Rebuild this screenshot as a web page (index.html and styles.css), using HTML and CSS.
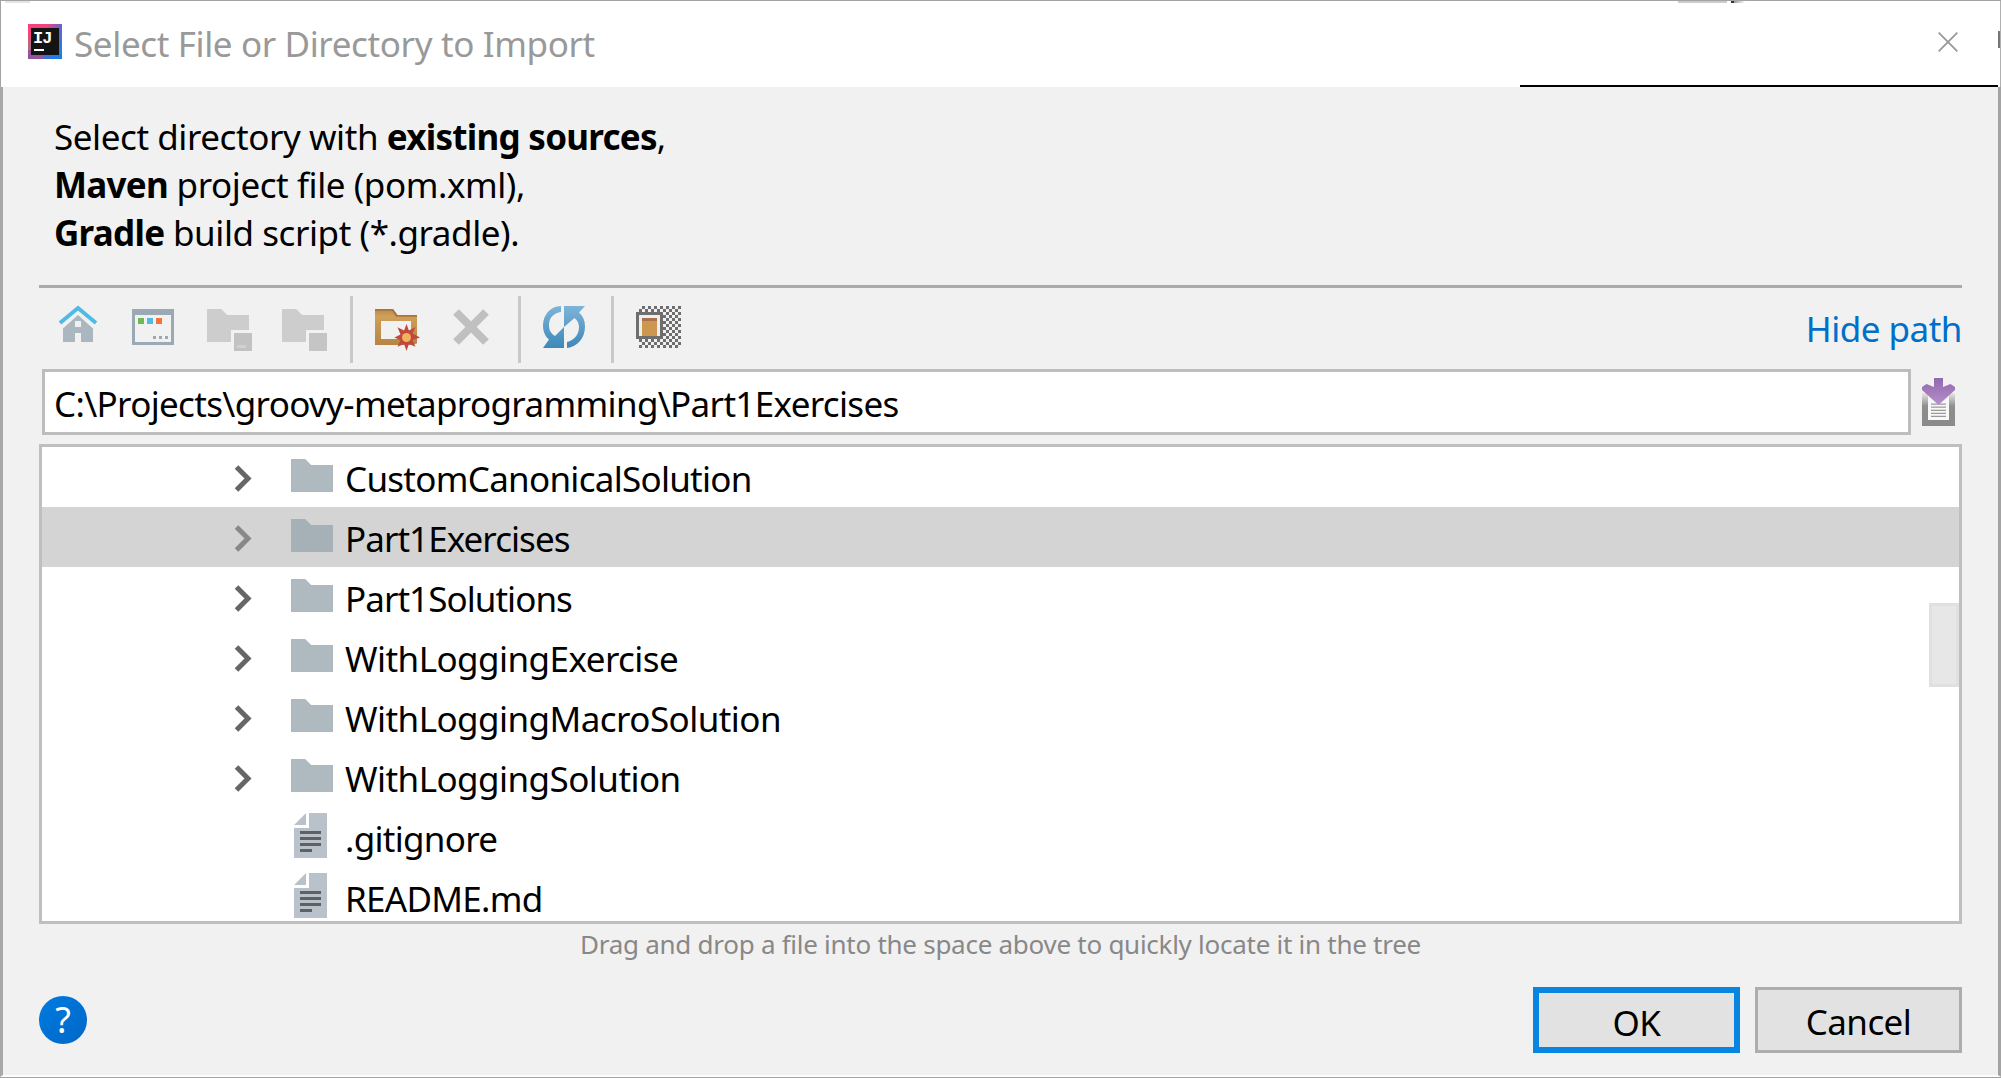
FILE: index.html
```html
<!DOCTYPE html>
<html lang="en">
<head>
<meta charset="utf-8">
<title>Select File or Directory to Import</title>
<link rel="stylesheet" href="styles.css">
</head>
<body>
<svg class="defs" aria-hidden="true">
  <defs>
    <linearGradient id="logo" x1="0" y1="0" x2="1" y2="1"><stop offset="0" stop-color="#ff3f7c"/><stop offset=".3" stop-color="#ee447f"/><stop offset=".5" stop-color="#6b62c8"/><stop offset="1" stop-color="#0a84f0"/></linearGradient>
    <linearGradient id="wood" x1="0" y1="0" x2="0" y2="1"><stop offset="0" stop-color="#b9884b"/><stop offset=".2" stop-color="#cf9f5b"/><stop offset="1" stop-color="#b78443"/></linearGradient>
    <linearGradient id="blue" x1="0" y1="0" x2="0" y2="1"><stop offset="0" stop-color="#7db4d8"/><stop offset="1" stop-color="#3d88b8"/></linearGradient>
    <linearGradient id="tray" x1="0" y1="0" x2="0" y2="1"><stop offset="0" stop-color="#e8e8e8"/><stop offset=".4" stop-color="#8e8e8e"/><stop offset="1" stop-color="#8a8a8a"/></linearGradient>
    <linearGradient id="violet" x1="0" y1="0" x2="0" y2="1"><stop offset="0" stop-color="#9068ad"/><stop offset="1" stop-color="#b78fcb"/></linearGradient>
    <pattern id="checker" width="2" height="2" patternUnits="userSpaceOnUse"><rect width="1" height="1" fill="#6e6e6e"/><rect x="1" y="1" width="1" height="1" fill="#6e6e6e"/></pattern>
    <symbol id="chevron" viewBox="0 0 18 27"><path d="M2.500 2 14 13.500 2.500 25" fill="none" stroke="currentColor" stroke-width="5"/></symbol>
    <symbol id="folder" viewBox="0 0 14 11"><path d="M0 0h4.700l2 2H14v9H0z" fill="currentColor"/></symbol>
    <symbol id="file" viewBox="0 0 11 15"><path d="M5 0h6v15H0V5h5zM4 0v4H0z" fill="#b9c2ca"/><path d="M2 6h7v1H2zM2 8h7v1H2zM2 10h7v1H2zM2 12h4v1H2z" fill="#5e6163"/></symbol>
  </defs>
</svg>
<div class="window">
  <header class="titlebar">
    <svg class="logo" viewBox="0 0 34 35"><rect width="34" height="35" fill="url(#logo)"/><path d="M0 12l4 8v15H0z" fill="#b96a7a"/><path d="M0 26h16v9H0z" fill="#96549b"/><rect x="3" y="4" width="28" height="27" fill="#141414"/><text x="5" y="19" class="logo-text">IJ</text><rect x="6" y="25" width="10" height="2" fill="#fff"/></svg>
    <h1 class="title">Select File or Directory to Import</h1>
    <svg class="close" viewBox="0 0 20 20"><path d="M.7.7l18.600 18.600M19.300.7.7 19.300" stroke="#999" stroke-width="1.800"/></svg>
  </header>
  <main class="body">
    <p class="intro">Select directory with <b>existing sources</b>,<br><b>Maven</b> project file (pom.xml),<br><b>Gradle</b> build script (*.gradle).</p>
    <div class="toolbar">
      <svg class="icon" viewBox="0 0 16 16"><path d="M3 8.500 8 4l5 4.500V13H9v-3H7v3H3z" fill="#aab7bf"/><path d="M7 6h2v2H7z" fill="#f1f1f1"/><path d="M2 6.700 8 1.700l6 5" fill="none" stroke="#4fbbe4" stroke-width="1.300"/></svg>
      <svg class="icon" viewBox="0 0 16 16"><path d="M1 2h14v12H1zM2 4v9h12V4z" fill="#9aa9b3" fill-rule="evenodd"/><path d="M3 5h2v2H3z" fill="#6dba55"/><path d="M6 5h2v2H6z" fill="#4fbbe4"/><path d="M9 5h2v2H9z" fill="#f67236"/><path d="M8 11h1v1H8zM10 11h1v1h-1zM12 11h1v1h-1z" fill="#9aa9b3"/></svg>
      <svg class="icon" viewBox="0 0 16 16"><path d="M1 2h4.700l2 2H15v5H9v4H1z" fill="#cdcdcd"/><path d="M10 10h6v6h-6z" fill="#c2c2c2"/><path d="M11 14h3v1h-3z" fill="#d0d0d0"/></svg>
      <svg class="icon" viewBox="0 0 16 16"><path d="M1 2h4.700l2 2H15v5H9v4H1z" fill="#cdcdcd"/><path d="M10 10h6v6h-6z" fill="#c5c5c5"/></svg>
      <i class="sep"></i>
      <svg class="icon" viewBox="0 0 16 16"><path d="M1 2h6l1.500 2H15v9.500l-2 .5H1zM3 6v6h10V6z" fill="url(#wood)" fill-rule="evenodd"/><path d="M1 2h6l1.500 2H15v.6H8L6.700 2.600H1z" fill="#a87538"/><path d="M11.500 7l.8 2.200 2.200-1.200-1 2.200 2.500 1.300-2.500.8 1 2.300-2.200-.9-.8 2.300-.8-2.300-2.200.9 1-2.200-2-.9 2-1-1-2.400 2.200 1.100z" fill="#c1483a"/><circle cx="11.500" cy="11.500" r="1.500" fill="#efb35c"/></svg>
      <svg class="icon" viewBox="0 0 16 16"><path d="M3 3l10 10M13 3 3 13" stroke="#c0c0c0" stroke-width="2.700"/></svg>
      <i class="sep"></i>
      <svg class="icon" viewBox="0 0 16 16"><path d="M7 1C3.500 1 1 4 1 7.500c0 2.200.8 3.600 2 4.700L1 15h7V8l-3 3C3.500 10 3 9 3 7.300 3 5 4.500 3.300 7 3z" fill="url(#blue)"/><path d="M8 1h7l-2 2.200c1.300 1.200 2 2.700 2 4.600 0 4-2.600 6.700-6 7.200v-2c2.400-.5 4-2.500 4-5 0-1.300-.6-2.300-1.500-3L8 8z" fill="url(#blue)"/></svg>
      <i class="sep"></i>
      <svg class="icon" viewBox="0 0 16 16"><path d="M2 1h14v14H2z" fill="url(#checker)"/><path d="M1 3h9v9H1z" fill="#6e6e6e"/><path d="M2 4h7v7H2z" fill="#eee"/><path d="M3 5h5v6H3z" fill="#cc9850"/><path d="M3 5h5v1H3z" fill="#a8704c"/></svg>
      <a class="hide-path">Hide path</a>
    </div>
    <div class="path-row">
      <div class="path">C:\Projects\groovy-metaprogramming\Part1Exercises</div>
      <svg class="history" viewBox="0 0 11 16"><path d="M0 5h11v11H0z" fill="url(#tray)"/><path d="M2 5h7v9H2z" fill="#f8f8f8"/><path d="M3 8.700h5M3 9.700h5M3 10.800h5M3 11.800h5M3 12.800h5" stroke="#999" stroke-width=".4"/><path d="M4 0h3v3L9.500 2 11 3v1L5.500 9 0 4V3l1.500-1L4 3z" fill="url(#violet)"/></svg>
    </div>
    <div class="tree">
      <div class="row"><svg class="chevron"><use href="#chevron"/></svg><svg class="folder"><use href="#folder"/></svg><span>CustomCanonicalSolution</span></div>
      <div class="row selected"><svg class="chevron"><use href="#chevron"/></svg><svg class="folder"><use href="#folder"/></svg><span class="tight">Part1Exercises</span></div>
      <div class="row"><svg class="chevron"><use href="#chevron"/></svg><svg class="folder"><use href="#folder"/></svg><span class="tight">Part1Solutions</span></div>
      <div class="row"><svg class="chevron"><use href="#chevron"/></svg><svg class="folder"><use href="#folder"/></svg><span class="loose">WithLoggingExercise</span></div>
      <div class="row"><svg class="chevron"><use href="#chevron"/></svg><svg class="folder"><use href="#folder"/></svg><span class="loose">WithLoggingMacroSolution</span></div>
      <div class="row"><svg class="chevron"><use href="#chevron"/></svg><svg class="folder"><use href="#folder"/></svg><span class="loose">WithLoggingSolution</span></div>
      <div class="row leaf"><svg class="file"><use href="#file"/></svg><span>.gitignore</span></div>
      <div class="row leaf"><svg class="file"><use href="#file"/></svg><span>README.md</span></div>
      <div class="thumb"></div>
    </div>
    <p class="hint">Drag and drop a file into the space above to quickly locate it in the tree</p>
    <footer class="actions">
      <button class="help">?</button>
      <button class="btn primary">OK</button>
      <button class="btn">Cancel</button>
    </footer>
  </main>
</div>
</body>
</html>
```
FILE: styles.css
```css
* { box-sizing: border-box; }
body {
  margin: 0;
  color: #000;
  background: #f1f1f1;
  font-family: "Noto Sans", "Open Sans", sans-serif;
  font-size: 35px;
}
.defs { position: absolute; width: 0; height: 0; }
.window {
  display: flex;
  flex-direction: column;
  width: 2001px;
  height: 1078px;
  overflow: hidden;
  border-top: 1px solid #a3a3a3;
  border-bottom: 1px solid #a3a3a3;
}
.titlebar {
  display: flex;
  align-items: flex-start;
  height: 86px;
  padding: 0 42px 0 27px;
  background:
    linear-gradient(#000, #000) 1519px 100% / 478px 2px no-repeat,
    linear-gradient(#ccc, #ccc) 1677px 0 / 49px 2px no-repeat,
    linear-gradient(90deg, #2b3350 3px, #999 3px, #fff) 1730px 0 / 14px 2px no-repeat,
    linear-gradient(#e4e4e4, #e4e4e4) 4px 0 / 25px 2px no-repeat,
    linear-gradient(#777, #777) 100% 30px / 2px 17px no-repeat,
    #fff;
  border-left: 1px solid #a3a3a3;
  border-right: 1px solid #b0b0b0;
}
.logo { width: 34px; height: 35px; margin-top: 23px; }
.logo-text { font: bold 17px "Liberation Mono", monospace; fill: #fff; letter-spacing: -1px; }
.title {
  flex: 1;
  margin: 16px 0 0 12px;
  font-size: 35px;
  line-height: 54px;
  font-weight: 400;
  letter-spacing: -.37px;
  color: #999;
}
.close { width: 20px; height: 20px; margin-top: 31px; }
.body {
  display: flex;
  flex-direction: column;
  flex: 1;
  padding: 27px 36px 0;
  border-left: 3px solid #a8a8a8;
  border-right: 3px solid #a3a3a3;
  border-bottom: 2px solid #fcfcfc;
}
.intro {
  height: 171px;
  margin: -1px 0 1px;
  padding-left: 15px;
  line-height: 48px;
  letter-spacing: -.43px;
}
.intro b { letter-spacing: -.73px; }
.toolbar {
  display: flex;
  align-items: flex-start;
  height: 84px;
  padding: 15px 0 0 15px;
  border-top: 3px solid #aaa;
}
.icon { width: 48px; height: 48px; margin-right: 27px; }
.sep {
  width: 3px;
  height: 67px;
  margin: -7px 19px 0 -4px;
  background: #c9c9c9;
}
.hide-path {
  margin: -1px 0 0 auto;
  line-height: 54px;
  letter-spacing: -.5px;
  color: #006fc9;
}
.path-row { display: flex; height: 66px; padding-left: 3px; }
.path {
  width: 1869px;
  padding-left: 9px;
  line-height: 64px;
  letter-spacing: -.66px;
  background: #fff;
  border: 3px solid #bdbdbd;
}
.history { width: 33px; height: 48px; margin: 9px 0 0 11px; }
.tree {
  position: relative;
  height: 480px;
  margin-top: 9px;
  overflow: hidden;
  background: #fff;
  border: 3px solid #bfbfbf;
}
.row {
  display: flex;
  align-items: flex-start;
  height: 60px;
  padding-left: 192px;
  line-height: 64px;
  letter-spacing: -.72px;
}
.tight { letter-spacing: -.95px; }
.loose { letter-spacing: -.55px; }
.selected { background: #d4d4d4; }
.chevron { width: 18px; height: 27px; margin: 18px 39px 0 0; color: #666; }
.folder { width: 42px; height: 33px; margin: 12px 12px 0 0; color: #aeb9c0; }
.selected .chevron { color: #888; }
.selected .folder { color: #a5b0b7; }
.leaf { padding-left: 252px; }
.file { width: 33px; height: 45px; margin: 6px 18px 0 0; }
.thumb {
  position: absolute;
  top: 156px;
  right: 0;
  width: 30px;
  height: 84px;
  background: #e7e7e7;
  border: 3px solid #e0e0e0;
}
.hint {
  height: 63px;
  margin: 0;
  font-size: 26px;
  line-height: 40px;
  letter-spacing: -.27px;
  text-align: center;
  color: #888;
}
.actions { display: flex; height: 66px; }
.help {
  width: 48px;
  height: 48px;
  margin: 9px auto 0 0;
  padding: 0;
  font: 36px/48px "Noto Sans", sans-serif;
  color: #fff;
  background: linear-gradient(135deg, #007be0, #0067c8);
  border: 0;
  border-radius: 50%;
}
.btn {
  width: 207px;
  height: 66px;
  margin-left: 15px;
  padding: 3px 0 0;
  font: 35px/54px "Noto Sans", sans-serif;
  letter-spacing: -.6px;
  color: #000;
  background: #e2e2e2;
  border: 3px solid #adadad;
}
.primary { border: 6px solid #0785e0; }
```
